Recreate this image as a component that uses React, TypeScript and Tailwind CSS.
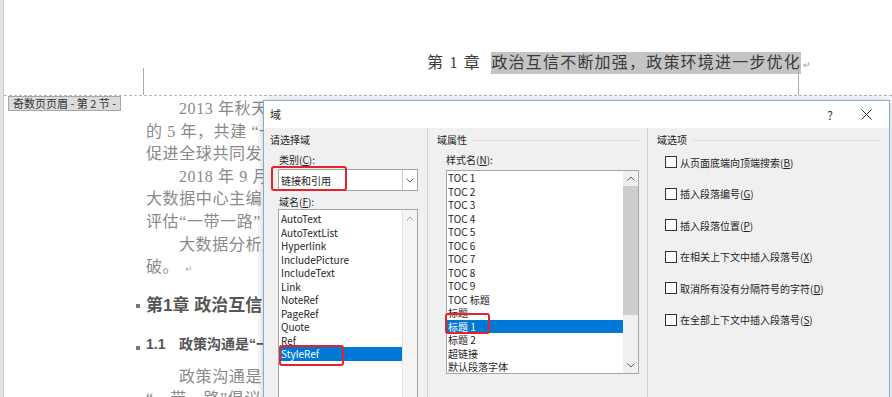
import React from 'react';

const categoryItems = [
  'AutoText',
  'AutoTextList',
  'Hyperlink',
  'IncludePicture',
  'IncludeText',
  'Link',
  'NoteRef',
  'PageRef',
  'Quote',
  'Ref',
  'StyleRef',
];

const styleItems = [
  'TOC 1',
  'TOC 2',
  'TOC 3',
  'TOC 4',
  'TOC 5',
  'TOC 6',
  'TOC 7',
  'TOC 8',
  'TOC 9',
  'TOC 标题',
  '标题',
  '标题 1',
  '标题 2',
  '超链接',
  '默认段落字体',
];

const options: { label: string; key: string }[] = [
  { label: '从页面底端向顶端搜索', key: 'B' },
  { label: '插入段落编号', key: 'G' },
  { label: '插入段落位置', key: 'P' },
  { label: '在相关上下文中插入段落号', key: 'X' },
  { label: '取消所有没有分隔符号的字符', key: 'D' },
  { label: '在全部上下文中插入段落号', key: 'S' },
];

const Chevron = ({ up = false, color = '#606060' }: { up?: boolean; color?: string }) => (
  <svg width="8" height="5" viewBox="0 0 8 5" className="block">
    <polyline
      points={up ? '0.5,4.5 4,1 7.5,4.5' : '0.5,0.5 4,4 7.5,0.5'}
      fill="none"
      stroke={color}
      strokeWidth="1"
    />
  </svg>
);

export default function App() {
  return (
    <div className="relative w-[892px] h-[397px] overflow-hidden bg-white flex">
      {/* left edge of the word window */}
      <div className="w-[4px] shrink-0 bg-[#e4e4e4] border-r border-[#c9c9c9]" />

      {/* document page */}
      <div className="relative flex-1 flex flex-col">
        {/* header area */}
        <div className="h-[96px] shrink-0 border-b border-dashed border-[#b8b8b8] pt-[50px] pl-[423px]">
          <div className="flex items-center whitespace-nowrap font-['Liberation_Serif','Noto_Sans_CJK_SC',serif] text-[16px] leading-[22px] tracking-[1.2px] text-[#3a3a3a]">
            <span className="whitespace-pre">第 1 章  </span>
            <span className="inline-block h-[22px] bg-[#c4c4c4]">政治互信不断加强，政策环境进一步优化</span>
            <span className="text-[9px] text-[#9a9a9a] ml-[2px] mt-[4px]">↵</span>
          </div>
        </div>
        <div className="absolute left-[139px] top-[68px] h-[27px] w-px bg-[#a8a8a8]" />
        <div className="absolute left-[794px] top-[68px] h-[27px] w-px bg-[#a8a8a8]" />

        {/* header tag */}
        <div className="absolute left-[4px] top-[96px] h-[15px] px-[4px] bg-[#dcdcdc] border border-[#a6a6a6] text-[11px] leading-[13px] text-[#333] font-['Noto_Sans_CJK_SC',sans-serif] whitespace-nowrap">
          奇数页页眉 - 第 2 节 -
        </div>

        {/* body text */}
        <div className="pt-[2px] pl-[142px] font-['Liberation_Serif','Noto_Sans_CJK_SC',serif] text-[16px] leading-[22.6px] tracking-[0.6px] text-[#8a8a8a] whitespace-nowrap">
          <div className="pl-[33px]">2013 年秋天，</div>
          <div>的 5 年，共建 “一</div>
          <div>促进全球共同发展</div>
          <div className="pl-[33px]">2018 年 9 月，</div>
          <div>大数据中心主编的</div>
          <div>评估“一带一路”</div>
          <div className="pl-[33px]">大数据分析显</div>
          <div>
            破。<span className="text-[9px] text-[#aaaaaa] ml-[6px]">↵</span>
          </div>

          <div className="mt-[13px] flex items-center font-['Liberation_Sans','Noto_Sans_CJK_SC',sans-serif] font-bold text-[17px] leading-[24px] tracking-normal text-[#555]">
            <span className="-ml-[10px] w-[10px] flex items-center">
              <span className="block w-[4px] h-[4px] bg-[#777]" />
            </span>
            第1章 政治互信不断
          </div>

          <div className="mt-[16px] flex items-end font-['Liberation_Sans','Noto_Sans_CJK_SC',sans-serif] font-bold text-[14px] leading-[20px] tracking-normal text-[#555]">
            <span className="-ml-[10px] w-[10px] flex items-end pb-[4px]">
              <span className="block w-[4px] h-[4px] bg-[#777]" />
            </span>
            <span className="w-[33px]">1.1</span>
            政策沟通是“一
          </div>

          <div className="mt-[12px] pl-[33px]">政策沟通是“</div>
          <div>“一带一路”倡议</div>
        </div>
      </div>

      {/* 域 dialog */}
      <div className="absolute left-[263px] top-[100px] w-[627px] h-[320px] border border-[#86abd6] bg-[#f0f0f0] shadow-[0_0_8px_rgba(0,0,0,0.22)] font-['Noto_Sans_CJK_SC',sans-serif] text-[10px] text-[#1e1e1e]">
        {/* title bar */}
        <div className="h-[27px] bg-white flex items-center pl-[6px]">
          <span className="text-[11px]">域</span>
          <div className="ml-auto flex items-center">
            <span className="w-[26px] text-center text-[12px] text-[#333]">?</span>
            <span className="w-[46px] flex justify-center">
              <svg width="11" height="11" viewBox="0 0 11 11">
                <line x1="0.5" y1="0.5" x2="10.5" y2="10.5" stroke="#333" strokeWidth="1" />
                <line x1="10.5" y1="0.5" x2="0.5" y2="10.5" stroke="#333" strokeWidth="1" />
              </svg>
            </span>
          </div>
        </div>

        <div className="flex h-[292px]">
          {/* column 1 */}
          <div className="w-[164px] shrink-0 border-r border-[#d2d2d2] pt-[4px] pl-[6px]">
            <div className="leading-[16px]">请选择域</div>
            <div className="mt-[4px] pl-[9px] leading-[16px]">
              类别(<span className="underline">C</span>):
            </div>
            <div className="mt-[1px] ml-[8px] w-[140px] h-[22px] bg-white border border-[#a5a5a5] flex items-center">
              <span className="pl-[2px] flex-1">链接和引用</span>
              <span className="w-[15px] h-full border-l border-[#c8c8c8] flex items-center justify-center">
                <Chevron />
              </span>
            </div>
            <div className="mt-[3px] pl-[9px] h-[15px] leading-[15px]">
              域名(<span className="underline">F</span>):
            </div>
            <div className="ml-[8px] w-[140px] h-[200px] bg-white border border-[#a5a5a5] flex">
              <div className="flex-1 pt-[2px]">
                {categoryItems.map((item) => (
                  <div
                    key={item}
                    className={`pl-[2px] leading-[13.5px] h-[13.5px] ${
                      item === 'StyleRef' ? 'bg-[#0078d7] text-white' : ''
                    }`}
                  >
                    {item}
                  </div>
                ))}
              </div>
              <div className="w-[15px] bg-[#f4f4f4] border-l border-[#e3e3e3] flex flex-col items-center pt-[6px]">
                <Chevron up color="#a8a8a8" />
              </div>
            </div>
          </div>

          {/* column 2 */}
          <div className="w-[220px] shrink-0 border-r border-[#d2d2d2] pt-[4px] pl-[9px]">
            <div className="flex items-center leading-[16px]">
              <span>域属性</span>
              <span className="flex-1 h-px bg-[#dcdcdc] ml-[6px] mr-[8px]" />
            </div>
            <div className="mt-[4px] pl-[9px] leading-[16px]">
              样式名(<span className="underline">N</span>):
            </div>
            <div className="mt-[2px] ml-[9px] w-[193px] h-[204px] bg-white border border-[#a5a5a5] flex">
              <div className="flex-1">
                {styleItems.map((item) => (
                  <div
                    key={item}
                    className={`pl-[1px] leading-[13.5px] h-[13.5px] ${
                      item === '标题 1' ? 'bg-[#0078d7] text-white' : ''
                    }`}
                  >
                    {item}
                  </div>
                ))}
              </div>
              <div className="w-[15px] bg-[#f0f0f0] flex flex-col">
                <div className="h-[15px] flex items-center justify-center">
                  <Chevron up />
                </div>
                <div className="h-[129px] bg-[#cdcdcd]" />
                <div className="flex-1" />
                <div className="h-[15px] flex items-center justify-center">
                  <Chevron />
                </div>
              </div>
            </div>
          </div>

          {/* column 3 */}
          <div className="flex-1 pt-[4px] pl-[9px]">
            <div className="flex items-center leading-[16px]">
              <span>域选项</span>
              <span className="flex-1 h-px bg-[#dcdcdc] ml-[6px] mr-[9px]" />
            </div>
            <div className="mt-[6px] flex flex-col gap-[15.6px]">
              {options.map((o) => (
                <div key={o.key} className="h-[16px] flex items-center ml-[8px]">
                  <span className="w-[12px] h-[12px] bg-white border border-[#333]" />
                  <span className="ml-[3px] whitespace-nowrap">
                    {o.label}(<span className="underline">{o.key}</span>)
                  </span>
                </div>
              ))}
            </div>
          </div>
        </div>

        {/* red annotation boxes */}
        <div className="absolute left-[7px] top-[65px] w-[76px] h-[25px] border-2 border-[#e5232b] rounded-[3px]" />
        <div className="absolute left-[15px] top-[244px] w-[65px] h-[21px] border-2 border-[#e5232b] rounded-[3px]" />
        <div className="absolute left-[181px] top-[212px] w-[45px] h-[21px] border-2 border-[#e5232b] rounded-[3px]" />
      </div>
    </div>
  );
}
